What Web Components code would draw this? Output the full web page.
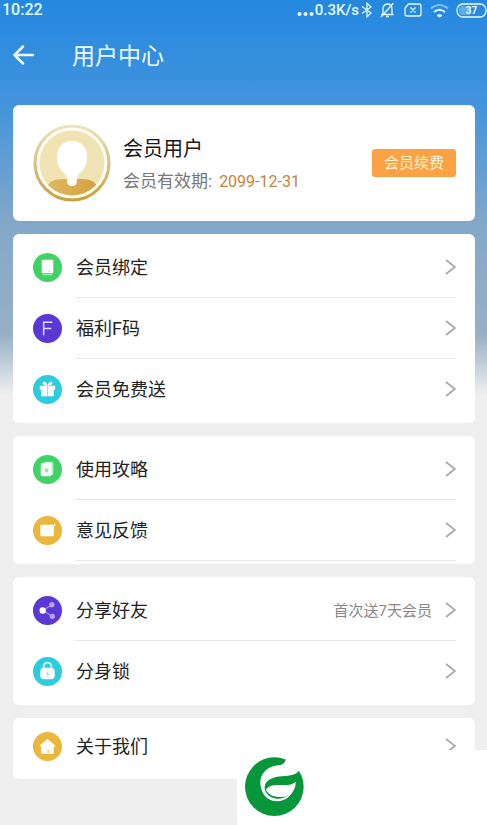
<!DOCTYPE html>
<html lang="zh-CN">
<head>
<meta charset="utf-8">
<meta name="viewport" content="width=device-width, initial-scale=1">
<title>用户中心</title>
<style>
body{margin:0;font-family:Roboto,"Noto Sans CJK SC",sans-serif;background:#efefef;color:#222}
</style>
</head>
<body>
<user-center></user-center>
<script>
const define = (name, html, setup) => {
  const t = document.createElement('template');
  t.innerHTML = html;
  customElements.define(name, class extends HTMLElement {
    constructor() {
      super();
      this.attachShadow({mode: 'open'}).append(t.content.cloneNode(true));
    }
    connectedCallback() { if (setup) setup(this, this.shadowRoot); }
  });
};

define('status-bar', `
<style>
:host{display:flex;align-items:center;justify-content:space-between;height:20px;padding:0 0 0 2px;color:#e4fbff;font-size:16px;line-height:20px;font-weight:500}
.right{display:flex;align-items:center}
.speed{font-size:15px}
svg{display:block;fill:none;stroke:currentColor}
.dots{margin-right:1px}
.wifi{margin:0 7px 0 8px}
.bell{margin:0 9px 0 6px}
.battery{position:relative}
.battery span{position:absolute;inset:0;text-align:center;font-size:10px;line-height:15px;font-weight:700}
</style>
<span>10:22</span>
<div class="right">
<svg class="dots" width="17" height="16"><g fill="currentColor" stroke="none"><circle cx="2.5" cy="12" r="2"/><circle cx="8.5" cy="12" r="2"/><circle cx="14.5" cy="12" r="2"/></g></svg>
<span class="speed">0.3K/s</span>
<svg width="15" height="16" viewBox="-2 0 15 16" stroke-width="1.3"><path d="M1 4.500l9 6.500-4 3.800V1.200L10 5l-9 6.500"/></svg>
<svg class="bell" width="15" height="16" viewBox="0 0 15 16" stroke-width="1.3"><path d="M1 12.500h12.500M3 12V7q0-4 4-5 5 0 5 5v5M6 14.500h3M13.500 1L1 15"/></svg>
<svg width="18" height="14" viewBox="0 0 18 14" stroke-width="1.3"><path d="M4.500 1H15q2 0 2 2v8q0 2-2 2H3q-2 0-2-2V5zM6.500 4.500l5 5m0-5l-5 5"/></svg>
<svg class="wifi" width="19" height="15" viewBox="0 0 19 15" stroke-width="2"><path d="M1 5.500Q9.500-1.500 18 5.500" opacity=".45"/><path d="M4 9Q9.500 4.500 15 9"/><path d="M7 12.500q2.500-2 5 0L9.500 14z" fill="currentColor" stroke-width="1"/></svg>
<div class="battery"><svg width="31" height="15" viewBox="0 0 31 15" stroke-width="1.3"><rect x="1" y="1" width="29" height="13" rx="6"/><path d="M7 3h7v9H7q-4 0-4-4.500T7 3z" fill="#83c7ed" stroke="none" opacity=".6"/></svg><span>37</span></div>
</div>`);

define('page-header', `
<style>
:host{display:flex;align-items:center;gap:37px;height:70px;padding:0 12px;color:#effcff}
button{display:flex;padding:0;border:0;background:none;color:inherit}
svg{fill:none;stroke:currentColor;stroke-width:2.500;stroke-linecap:round;stroke-linejoin:round}
h1{margin:0;padding-top:4px;font-size:23px;line-height:32px;font-weight:400}
</style>
<button type="button" aria-label="返回"><svg width="23" height="22"><path d="M21 11H2.500M11 2.500L2.500 11l8.500 8.500"/></svg></button>
<h1><slot></slot></h1>`);

define('profile-card', `
<style>
:host{display:flex;align-items:center;gap:12px;padding:19px 19px 19px 20px;background:#fff;border-radius:6px}
svg{display:block;flex:none}
.info{flex:1;min-width:0;padding-top:2px}
h2{margin:0 0 4px;font-size:20px;line-height:30px;font-weight:400;color:#181818}
p{display:flex;align-items:baseline;gap:7px;margin:0;font-size:17px;line-height:26px;color:#777}
.date{font-size:16px;color:#c4843b}
button{padding:0 12px;border:0;border-radius:3px;background:#fba344;color:#fff2da;font:inherit;font-size:15px;line-height:28px}
</style>
<svg width="78" height="78" viewBox="0 0 78 78">
<defs><linearGradient id="ring" x2="0" y2="1"><stop stop-color="#eee4bd"/><stop offset=".5" stop-color="#d7bf87"/><stop offset="1" stop-color="#caa13e"/></linearGradient>
<linearGradient id="body" x2="1"><stop stop-color="#dfb965"/><stop offset="1" stop-color="#d5a13b"/></linearGradient>
<clipPath id="disc"><circle cx="39" cy="39" r="32.500"/></clipPath></defs>
<circle cx="39" cy="39" r="37" fill="#fffdf3" stroke="url(#ring)" stroke-width="3"/>
<circle cx="39" cy="39" r="32.500" fill="#f2e3b5"/>
<path clip-path="url(#disc)" d="M13 64q4-9 16-9h20q13 0 16 9v12H13z" fill="url(#body)"/>
<path d="M39 17c-10 0-15 7-15 16 0 7 3 12 7 16 3 3 3 5 3 7q0 6 5 6t5-6c0-2 0-4 3-7 4-4 7-9 7-16 0-9-5-16-15-16z" fill="#fff"/>
</svg>
<div class="info"><h2><slot name="name"></slot></h2><p><span>会员有效期:</span><span class="date"><slot name="date"></slot></span></p></div>
<button type="button">会员续费</button>`);

define('menu-group', `
<style>
:host{display:block;padding:3px 0;background:#fff;border-radius:6px}
:host([single]){padding:0 0 5px}
</style><slot></slot>`);

const icons = {
  card: ['#3fd264', '<rect x="9" y="7" width="12" height="14" rx="1" fill="#fff"/><path d="M10 22.500h10" stroke="#baf3c7"/><path d="M15 19h4" stroke="#baf3c7"/>'],
  letter: ['#5938d4', '<path d="M11 22V8.500h9M11 15h8" fill="none" stroke="#e4dcff" stroke-width="1.500"/>'],
  gift: ['#2dcbe0', '<g fill="#fff"><path d="M7 11h16v4H7zM8.500 15h13v7h-13z"/><path d="M15 11c-6 0-6-4-3.500-4Q14 7 15 11zm0 0c6 0 6-4 3.500-4Q16 7 15 11z"/></g><path d="M15 11v11" stroke="#8ae3ed"/>'],
  guide: ['#3fd264', '<path d="M12 7h7q2 0 2 2v10q0 2-2 2h-2" fill="#baf3c7"/><rect x="8" y="8" width="11" height="14" rx="2" fill="#fff"/><path d="M14 12.500l1 2 2 .5-1.500 1.500.5 2-2-1-2 1 .5-2L11 15l2-.5z" fill="#a3dfb5"/>'],
  mail: ['#eab63b', '<rect x="7.500" y="9" width="14" height="12" rx="1" fill="#fff"/><path d="M9 11l6 4 6-5" fill="none" stroke="#fdf3d8"/><path d="M17 13l5.500-5 1 1-5 5z" fill="#fff"/>'],
  share: ['#5938d4', '<path d="M19.500 9L10 15l10 6" fill="none" stroke="#a68df0" stroke-width="1.300"/><circle cx="10" cy="15" r="3.300" fill="#fff"/><circle cx="19.500" cy="9" r="2.700" fill="#b9a3f5"/><circle cx="20" cy="21" r="2.700" fill="#b9a3f5"/>'],
  lock: ['#2dcbe0', '<path d="M11 12v-2q0-4 4-4t4 4v2" fill="none" stroke="#b7f1f5" stroke-width="2"/><rect x="7.500" y="11" width="15" height="12" rx="4" fill="#fff"/><path d="M15.500 15l-1.500 2.500h2l-1 2.500" fill="none" stroke="#86dbe8"/>'],
  home: ['#eab63b', '<path d="M15 7.500l8 7h-2V22H9v-7.500H7z" fill="#fff" stroke="#fff" stroke-linejoin="round"/><path d="M15 22v-4h2v4z" fill="#f5d888"/>']
};

define('menu-item', `
<style>
:host{display:block}
a{display:flex;align-items:center;gap:14px;min-height:61px;padding:0 19px 0 20px;color:#222;text-decoration:none}
.icon{flex:none;display:block;width:29px;height:29px}
.line{display:flex;align-items:center;flex:1;align-self:stretch;border-bottom:1px solid #e8e8e8}
:host([last]) .line{border-color:transparent}
:host([compact]) a{min-height:56px}
.label{flex:1;padding-top:2px;font-size:18px;line-height:26px}
.hint{padding-top:2px;font-size:15px;line-height:22px;color:#888;margin-right:13px}
.arrow{display:block;fill:none;stroke:#a8a8a8;stroke-width:1.700}
</style>
<a href="#"><svg class="icon" viewBox="0 0 30 30"></svg><span class="line"><span class="label"><slot></slot></span><span class="hint"><slot name="hint"></slot></span><svg class="arrow" width="11" height="16"><path d="M1 1l9 7-9 7"/></svg></span></a>`,
(host, root) => {
  const [color, shape] = icons[host.getAttribute('icon')];
  root.querySelector('.icon').innerHTML = '<circle cx="15" cy="15" r="15" fill="' + color + '"/>' + shape;
});

define('brand-mark', `
<style>
:host{display:block;box-sizing:border-box;width:250px;height:75px;padding:7px;background:#fff}
svg{display:block}
</style>
<svg width="60" height="60" viewBox="6 9 180 180" role="img" aria-label="标志">
<circle cx="97" cy="98" r="88" fill="#06973a"/>
<path fill="#fff" d="M131 5V18Q128 33 108 34C72 38 53 63 55 90C57 120 78 142 105 142C130 142 148 126 155 106C144 122 125 137 103 134C80 131 67 115 68 98C70 78 95 68 120 67C146 66 163 62 172 49L190 45V5z"/>
<path fill="#fff" d="M72 108C78 95 95 92 115 93C138 94 153 92 161 83C162 106 148 126 120 129C98 131 79 122 72 108z"/>
</svg>`);

define('user-center', `
<style>
:host{display:block;position:relative;min-height:100vh;background:linear-gradient(#2488df 0,#2f8cdf 40px,#4494dc 105px,#83a8c9 225px,#98b0c5 335px,#efefef 395px)}
main{display:flex;flex-direction:column;gap:13px;padding:15px 12px 44px 13px}
brand-mark{position:absolute;right:0;bottom:0}
</style>
<status-bar></status-bar>
<page-header>用户中心</page-header>
<main>
<profile-card><span slot="name">会员用户</span><span slot="date">2099-12-31</span></profile-card>
<menu-group>
<menu-item icon="card">会员绑定</menu-item>
<menu-item icon="letter">福利F码</menu-item>
<menu-item icon="gift" last>会员免费送</menu-item>
</menu-group>
<menu-group>
<menu-item icon="guide">使用攻略</menu-item>
<menu-item icon="mail">意见反馈</menu-item>
</menu-group>
<menu-group>
<menu-item icon="share">分享好友<span slot="hint">首次送7天会员</span></menu-item>
<menu-item icon="lock" last>分身锁</menu-item>
</menu-group>
<menu-group single>
<menu-item icon="home" last compact>关于我们</menu-item>
</menu-group>
</main>
<brand-mark></brand-mark>`);
</script>
</body>
</html>
